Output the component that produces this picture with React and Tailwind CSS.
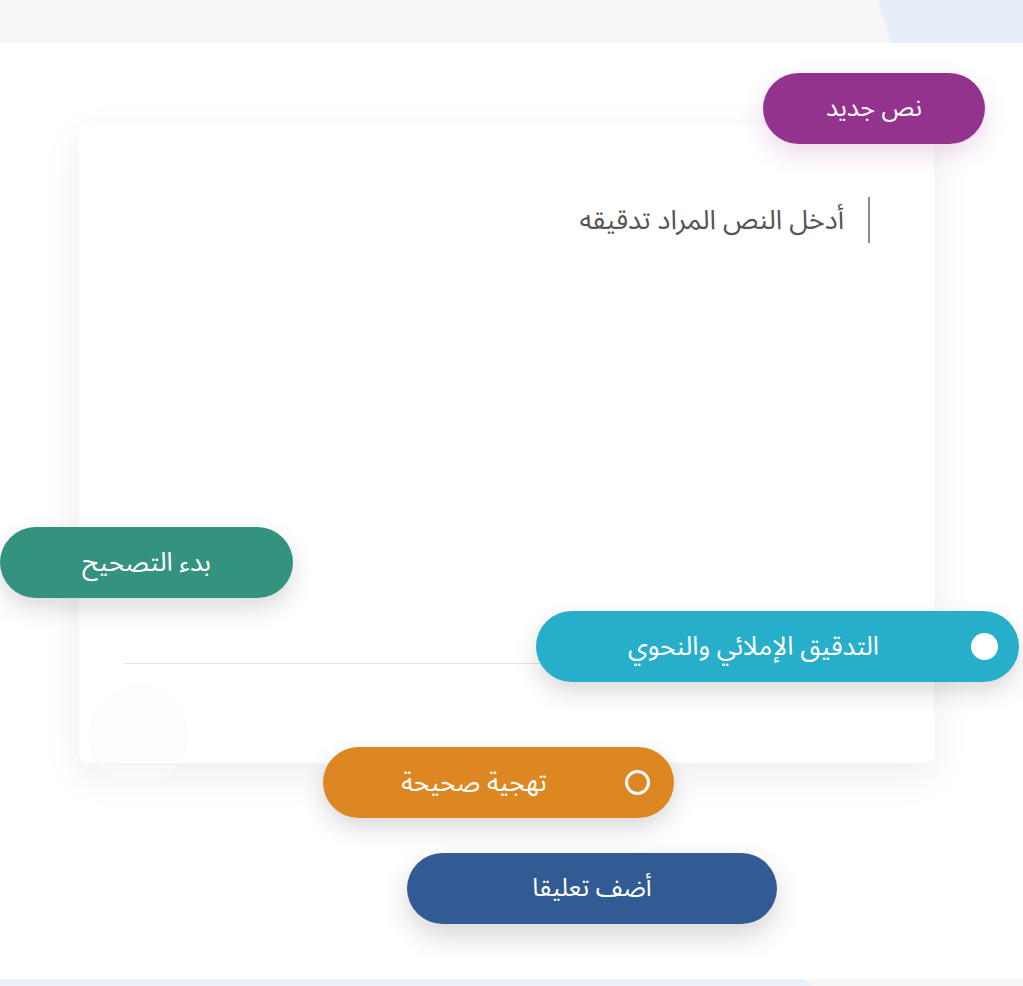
import React from 'react';

const arabic = { fontFamily: '"Noto Sans Arabic", "DejaVu Sans", "Noto Sans", sans-serif' };

function Pill({ className, children, circle }) {
  return (
    <button
      type="button"
      dir="rtl"
      className={`absolute flex h-[71px] items-center rounded-full text-white ${className}`}
    >
      {circle}
      <span className="flex-1 text-center leading-none">{children}</span>
    </button>
  );
}

export default function App() {
  return (
    <div dir="ltr" className="relative h-[986px] w-[1023px] overflow-hidden bg-white" style={arabic}>
      {/* top band */}
      <div className="relative h-[43px] bg-[#f7f7f7]">
        <div className="absolute inset-y-0 right-0 w-[145px] bg-[#e5eef9] [clip-path:polygon(0_0,100%_0,100%_100%,9%_100%)]" />
      </div>

      {/* card */}
      <div className="ml-[79px] mt-[82px] flex h-[638px] w-[855px] flex-col rounded-lg bg-white shadow-[0_12px_40px_rgba(0,0,0,0.07)]">
        <div dir="rtl" className="flex pr-[64px] pt-[72px]">
          <div className="flex h-[46px] items-center border-r-2 border-[#8a8a8a] pr-[24px] text-[27px] leading-none text-[#555]">
            أدخل النص المراد تدقيقه
          </div>
        </div>
        <div className="flex-1" />
        <div className="ml-[45px] mr-[44px] mb-[99px] h-px bg-[#e4e4e4]" />
      </div>
      <div className="absolute left-[88px] top-[685px] h-[100px] w-[100px] rounded-full bg-[#fcfcfc] opacity-50" />

      {/* bottom band */}
      <div className="absolute inset-x-0 bottom-0 h-[7px] bg-[#f7f7f7]">
        <div className="absolute inset-y-0 left-0 w-[812px] bg-[#eaf1f9] [clip-path:polygon(0_0,99%_0,100%_100%,0_100%)]" />
      </div>

      <Pill className="left-[763px] top-[73px] w-[222px] bg-[#94338e] text-[25px] shadow-[0_10px_24px_rgba(148,51,142,0.18)]">
        نص جديد
      </Pill>

      <Pill className="left-0 top-[527px] w-[293px] bg-[#34937f] text-[26px] shadow-[0_10px_24px_rgba(0,0,0,0.15)]">
        بدء التصحيح
      </Pill>

      <Pill
        className="left-[536px] top-[611px] w-[483px] bg-[#26aecb] pr-[21px] text-[26px] shadow-[0_10px_24px_rgba(0,0,0,0.15)]"
        circle={<span className="h-[27px] w-[27px] rounded-full bg-white" />}
      >
        التدقيق الإملائي والنحوي
      </Pill>

      <Pill
        className="left-[323px] top-[747px] w-[351px] bg-[#dd8722] pr-[24px] text-[26px] shadow-[0_10px_24px_rgba(0,0,0,0.15)]"
        circle={<span className="h-[25px] w-[25px] rounded-full border-[3px] border-white" />}
      >
        تهجية صحيحة
      </Pill>

      <Pill className="left-[407px] top-[853px] w-[370px] bg-[#335b93] text-[25px] shadow-[0_12px_28px_rgba(0,0,0,0.16)]">
        أضف تعليقا
      </Pill>
    </div>
  );
}
